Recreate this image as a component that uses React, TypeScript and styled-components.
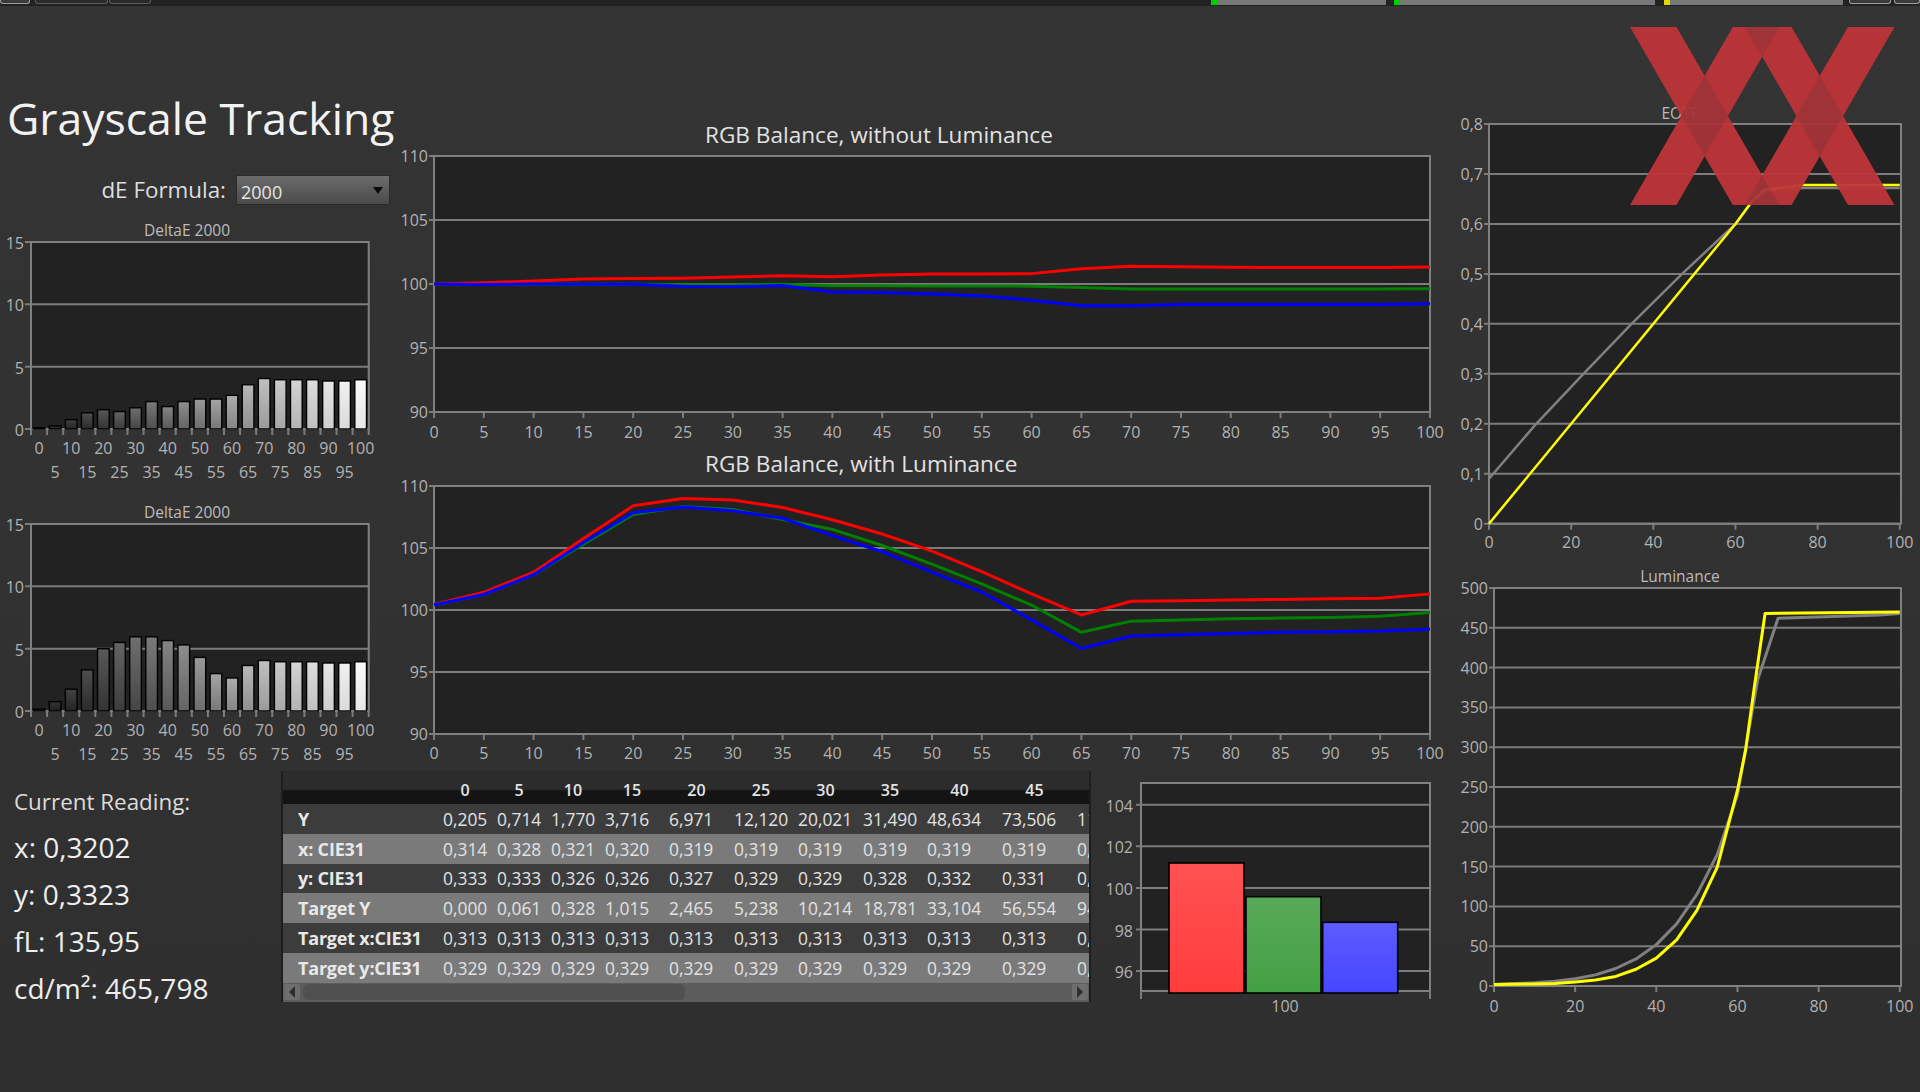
import styled, { createGlobalStyle } from 'styled-components';

type Point = [number, number];

type Series = {
  color: string;
  width: number;
  points: Point[];
};

const GlobalStyle = createGlobalStyle`
  html, body {
    margin: 0;
    padding: 0;
    background: #303030;
  }
  body {
    font-family: "Open Sans", "Noto Sans", "Liberation Sans", sans-serif;
    color: #dcdcdc;
  }
`;

const steps = Array.from({ length: 21 }, (_, i) => i * 5);
const withSteps = (values: number[]): Point[] => values.map((v, i) => [steps[i], v]);

const balanceFlat: Series[] = [
  {
    color: '#008000',
    width: 3,
    points: withSteps([100, 100, 100, 99.98, 99.98, 99.95, 99.95, 99.98, 99.87, 99.87, 99.85, 99.85, 99.83, 99.72, 99.6, 99.6, 99.6, 99.6, 99.6, 99.6, 99.62]),
  },
  {
    color: '#ff0000',
    width: 3,
    points: withSteps([100, 100.1, 100.23, 100.4, 100.42, 100.45, 100.55, 100.65, 100.57, 100.7, 100.78, 100.78, 100.81, 101.2, 101.38, 101.35, 101.3, 101.28, 101.28, 101.28, 101.33]),
  },
  {
    color: '#0000ff',
    width: 3,
    points: withSteps([100, 99.97, 100, 99.98, 99.98, 99.83, 99.8, 99.88, 99.38, 99.33, 99.22, 99.07, 98.73, 98.3, 98.3, 98.4, 98.4, 98.4, 98.4, 98.4, 98.45]),
  },
];

const balanceLum: Series[] = [
  {
    color: '#ff0000',
    width: 3,
    points: withSteps([100.44, 101.43, 103.05, 105.77, 108.4, 109, 108.87, 108.27, 107.28, 106.13, 104.75, 103.1, 101.3, 99.6, 100.7, 100.75, 100.8, 100.85, 100.9, 100.95, 101.3]),
  },
  {
    color: '#008000',
    width: 3,
    points: withSteps([100.4, 101.25, 102.85, 105.3, 107.7, 108.35, 108.1, 107.3, 106.5, 105.2, 103.7, 102.1, 100.4, 98.2, 99.1, 99.2, 99.3, 99.35, 99.4, 99.5, 99.8]),
  },
  {
    color: '#0000ff',
    width: 3,
    points: withSteps([100.4, 101.25, 102.85, 105.45, 107.85, 108.3, 108, 107.4, 106, 104.7, 103.05, 101.45, 99.2, 96.9, 97.9, 98, 98.1, 98.2, 98.25, 98.3, 98.45]),
  },
];

// eotf and luminance curves were read straight off the plot, in data units
const eotf: Series[] = [
  {
    color: '#808080',
    width: 2.5,
    points: [[0, 0.09], [11.5, 0.2], [23, 0.3], [34.7, 0.4], [47, 0.5], [60, 0.6], [64, 0.645], [68, 0.668], [76.5, 0.672], [100, 0.672]],
  },
  {
    color: '#ffff00',
    width: 2.5,
    points: [[0, 0], [60, 0.6], [64, 0.645], [67, 0.668], [76, 0.678], [100, 0.678]],
  },
];

const luminance: Series[] = [
  {
    color: '#808080',
    width: 3,
    points: [[0, 2], [5, 3], [10, 4], [15, 6], [20, 9], [25, 14], [30, 22], [35, 34], [40, 52], [45, 78], [50, 115], [55, 165], [60, 240], [65, 385], [70, 462], [95, 466], [100, 468]],
  },
  {
    color: '#ffff00',
    width: 3,
    points: [[0, 2], [10, 2.5], [15, 3], [20, 5], [25, 7.5], [30, 12], [35, 21], [40, 35], [45, 58], [50, 95], [55, 149], [60, 246], [62, 296], [64, 370], [66.8, 468], [100, 470]],
  },
];

const deltaOne = [0.1, 0.25, 0.75, 1.3, 1.55, 1.4, 1.7, 2.2, 1.8, 2.2, 2.4, 2.4, 2.7, 3.55, 4.05, 3.95, 3.95, 3.95, 3.85, 3.85, 3.95];
const deltaTwo = [0.15, 0.75, 1.75, 3.3, 5, 5.5, 5.95, 5.95, 5.65, 5.3, 4.3, 3, 2.65, 3.65, 4.05, 3.95, 3.95, 3.95, 3.85, 3.85, 3.95];

const tableHeads = ['0', '5', '10', '15', '20', '25', '30', '35', '40', '45', ''];

const tableRows: { label: string; values: string[] }[] = [
  { label: 'Y', values: ['0,205', '0,714', '1,770', '3,716', '6,971', '12,120', '20,021', '31,490', '48,634', '73,506', '11'] },
  { label: 'x: CIE31', values: ['0,314', '0,328', '0,321', '0,320', '0,319', '0,319', '0,319', '0,319', '0,319', '0,319', '0,'] },
  { label: 'y: CIE31', values: ['0,333', '0,333', '0,326', '0,326', '0,327', '0,329', '0,329', '0,328', '0,332', '0,331', '0,'] },
  { label: 'Target Y', values: ['0,000', '0,061', '0,328', '1,015', '2,465', '5,238', '10,214', '18,781', '33,104', '56,554', '94'] },
  { label: 'Target x:CIE31', values: ['0,313', '0,313', '0,313', '0,313', '0,313', '0,313', '0,313', '0,313', '0,313', '0,313', '0,'] },
  { label: 'Target y:CIE31', values: ['0,329', '0,329', '0,329', '0,329', '0,329', '0,329', '0,329', '0,329', '0,329', '0,329', '0,'] },
];

type LineChartProps = {
  width: number;
  height: number;
  left: number;
  top: number;
  plotW: number;
  plotH: number;
  xMax: number;
  yMin: number;
  yMax: number;
  xTicks: number[];
  yTicks: number[];
  labelGap: number;
  series: Series[];
  decimals?: boolean;
};

function LineChart(props: LineChartProps) {
  const { width, height, left, top, plotW, plotH, xMax, yMin, yMax, xTicks, yTicks, labelGap, series, decimals } = props;
  const sx = (v: number) => left + (v / xMax) * plotW;
  const sy = (v: number) => top + plotH - ((v - yMin) / (yMax - yMin)) * plotH;
  const bottom = top + plotH;
  return (
    <ChartSvg width={width} height={height}>
      <rect x={left} y={top} width={plotW} height={plotH} fill="#222222" />
      {yTicks.map((t) => (
        <g key={t}>
          <GridLine x1={left - 5} x2={left + plotW} y1={sy(t)} y2={sy(t)} />
          <AxisLabel x={left - 6} y={sy(t) + 6} textAnchor="end">
            {decimals ? String(t).replace('.', ',') : t}
          </AxisLabel>
        </g>
      ))}
      {xTicks.map((t) => (
        <g key={t}>
          <GridLine x1={sx(t)} x2={sx(t)} y1={bottom} y2={bottom + 6} />
          <AxisLabel x={sx(t)} y={bottom + labelGap} textAnchor="middle">
            {t}
          </AxisLabel>
        </g>
      ))}
      <PlotFrame x={left} y={top} width={plotW} height={plotH} />
      {series.map((s) => (
        <polyline
          key={s.color}
          points={s.points.map(([x, y]) => `${sx(x)},${sy(y)}`).join(' ')}
          fill="none"
          stroke={s.color}
          strokeWidth={s.width}
          strokeLinejoin="round"
        />
      ))}
    </ChartSvg>
  );
}

function DeltaChart({ id, values }: { id: string; values: number[] }) {
  const left = 31;
  const top = 2;
  const plotW = 337.7;
  const plotH = 187;
  const band = plotW / 21;
  const sy = (v: number) => top + plotH - (v / 15) * plotH;
  return (
    <ChartSvg width={374} height={244}>
      <defs>
        {values.map((_, i) => {
          const p = i / 20;
          const hi = Math.round(40 + 210 * Math.pow(p, 0.9));
          const lo = Math.round(26 + 205 * Math.pow(p, 1.3));
          return (
            <linearGradient key={i} id={`${id}-${i}`} x1="0" y1="0" x2="0" y2="1">
              <stop offset="0" stopColor={`rgb(${hi},${hi},${hi})`} />
              <stop offset="1" stopColor={`rgb(${lo},${lo},${lo})`} />
            </linearGradient>
          );
        })}
      </defs>
      <rect x={left} y={top} width={plotW} height={plotH} fill="#222222" />
      {[0, 5, 10, 15].map((t) => (
        <g key={t}>
          <GridLine x1={left - 6} x2={left + plotW} y1={sy(t)} y2={sy(t)} />
          <AxisLabel x={24} y={sy(t) + 7} textAnchor="end">
            {t}
          </AxisLabel>
        </g>
      ))}
      <PlotFrame x={left} y={top} width={plotW} height={plotH} />
      {values.map((v, i) => (
        <rect
          key={i}
          x={left + band * i + 2.2}
          y={sy(v)}
          width={band - 4.4}
          height={plotH + top - sy(v)}
          fill={`url(#${id}-${i})`}
          stroke="#000000"
          strokeWidth={1.4}
        />
      ))}
      {Array.from({ length: 22 }, (_, i) => (
        <GridLine key={i} x1={left + band * i} x2={left + band * i} y1={top + plotH} y2={top + plotH + 6} />
      ))}
      {steps.map((s, i) => (
        <AxisLabel key={s} x={left + band * (i + 0.5)} y={top + plotH + (i % 2 ? 49 : 25)} textAnchor="middle">
          {s}
        </AxisLabel>
      ))}
    </ChartSvg>
  );
}

function LevelChart() {
  const left = 50;
  const top = 12;
  const plotW = 289;
  const plotH = 208;
  const sy = (v: number) => 33.7 + (104 - v) * 20.8;
  const bars = [
    { x: 78, w: 75, y: 92, hi: '#ff5252', lo: '#ff3c3c' },
    { x: 155, w: 75, y: 125.7, hi: '#58aa58', lo: '#44a044' },
    { x: 231.7, w: 75, y: 151.3, hi: '#5c5cff', lo: '#4646ff' },
  ];
  return (
    <ChartSvg width={349} height={248}>
      <defs>
        {bars.map((b, i) => (
          <linearGradient key={i} id={`level-${i}`} x1="0" y1="0" x2="0" y2="1">
            <stop offset="0" stopColor={b.hi} />
            <stop offset="1" stopColor={b.lo} />
          </linearGradient>
        ))}
      </defs>
      <rect x={left} y={top} width={plotW} height={plotH} fill="#222222" />
      {[104, 102, 100, 98, 96].map((t) => (
        <g key={t}>
          <GridLine x1={left - 5} x2={left + plotW} y1={sy(t)} y2={sy(t)} />
          <AxisLabel x={42} y={sy(t) + 7} textAnchor="end">
            {t}
          </AxisLabel>
        </g>
      ))}
      <PlotFrame x={left} y={top} width={plotW} height={plotH} />
      {bars.map((b, i) => (
        <rect
          key={i}
          x={b.x}
          y={b.y}
          width={b.w}
          height={top + plotH + 2 - b.y}
          fill={`url(#level-${i})`}
          stroke="#000000"
          strokeWidth={1.6}
        />
      ))}
      <GridLine x1={left} x2={left} y1={top + plotH} y2={top + plotH + 8} />
      <GridLine x1={left + plotW} x2={left + plotW} y1={top + plotH} y2={top + plotH + 8} />
      <AxisLabel x={194} y={241} textAnchor="middle">
        100
      </AxisLabel>
    </ChartSvg>
  );
}

function Logo() {
  return (
    <LogoMark width={265} height={178} viewBox="0 0 265 178">
      <g opacity={0.95}>
        <polygon points="0,0 46.5,0 149.3,178 102.8,178" fill="#be3539" />
        <polygon points="102.8,0 149.3,0 46.5,178 0,178" fill="#be3539" />
        <polygon points="115,0 161.6,0 264.5,178 218,178" fill="#be3539" />
        <polygon points="218,0 264.5,0 161.6,178 115,178" fill="#be3539" />
        <polygon points="51.4,89 74.6,48.8 97.9,89 74.7,129.2" fill="#a63339" />
        <polygon points="166.5,89 189.8,48.8 213,89 189.7,129.2" fill="#a63339" />
        <polygon points="115,0 149.3,0 132,29.7" fill="#a63339" />
        <polygon points="115,178 149.3,178 132,148.3" fill="#a63339" />
      </g>
    </LogoMark>
  );
}

function App() {
  return (
    <>
      <GlobalStyle />
      <Page>
        <TopBar>
          <TopTab $width={30} $outlined />
          <TopTab $width={73} $gap={5} />
          <TopTab $width={42} $gap={1} />
          <TopSpacer />
          <Segment $accent="#00d000" $width={175} />
          <Segment $accent="#00d000" $width={261} $gap={8} />
          <Segment $accent="#e0d800" $width={179} $gap={9} />
          <TopTab $width={42} $gap={6} $outlined />
          <TopTab $width={26} $gap={3} $outlined />
        </TopBar>
        <Workspace>
          <LeftArea>
            <UpperRow>
              <SideColumn>
                <PageTitle>Grayscale Tracking</PageTitle>
                <FormulaRow>
                  <FormulaLabel>dE Formula:</FormulaLabel>
                  <FormulaSelect>
                    2000
                    <SelectArrow />
                  </FormulaSelect>
                </FormulaRow>
                <SmallTitle $top={15} $width={374}>DeltaE 2000</SmallTitle>
                <DeltaChart id="delta-a" values={deltaOne} />
                <SmallTitle $top={18} $width={374}>DeltaE 2000</SmallTitle>
                <DeltaChart id="delta-b" values={deltaTwo} />
              </SideColumn>
              <CenterColumn>
                <WideTitle>RGB Balance, without Luminance</WideTitle>
                <LineChart width={1040} height={299} left={34} top={5} plotW={996} plotH={256} xMax={100} yMin={90} yMax={110} xTicks={steps} yTicks={[90, 95, 100, 105, 110]} labelGap={26} series={balanceFlat} />
                <WideTitle>RGB Balance, with Luminance</WideTitle>
                <LineChart width={1040} height={285} left={34} top={6} plotW={996} plotH={248} xMax={100} yMin={90} yMax={110} xTicks={steps} yTicks={[90, 95, 100, 105, 110]} labelGap={25} series={balanceLum} />
              </CenterColumn>
            </UpperRow>
            <LowerRow>
              <ReadingPanel>
                <ReadingHead>Current Reading:</ReadingHead>
                <ReadingValue>x: 0,3202</ReadingValue>
                <ReadingValue>y: 0,3323</ReadingValue>
                <ReadingValue>fL: 135,95</ReadingValue>
                <ReadingValue>cd/m²: 465,798</ReadingValue>
              </ReadingPanel>
              <DataTable>
                <HeadRow>
                  <span />
                  {tableHeads.map((h, i) => (
                    <HeadCell key={i}>{h}</HeadCell>
                  ))}
                </HeadRow>
                {tableRows.map((row, i) => (
                  <BodyRow key={row.label} $light={i % 2 === 1}>
                    <RowLabel>{row.label}</RowLabel>
                    {row.values.map((v, j) => (
                      <ValueCell key={j}>{v}</ValueCell>
                    ))}
                  </BodyRow>
                ))}
                <ScrollBar>
                  <ScrollButton>
                    <ScrollArrow $left />
                  </ScrollButton>
                  <ScrollThumb />
                  <ScrollButton>
                    <ScrollArrow />
                  </ScrollButton>
                </ScrollBar>
              </DataTable>
              <LevelChart />
            </LowerRow>
          </LeftArea>
          <RightColumn>
            <SmallTitle $top={0} $width={480}>EOTF</SmallTitle>
            <LineChart width={480} height={438} left={49} top={1} plotW={412} plotH={399.7} xMax={100.3} yMin={0} yMax={0.8} xTicks={[0, 20, 40, 60, 80, 100]} yTicks={[0, 0.1, 0.2, 0.3, 0.4, 0.5, 0.6, 0.7, 0.8]} labelGap={24} series={eotf} decimals />
            <SmallTitle $top={5} $width={480}>Luminance</SmallTitle>
            <LineChart width={480} height={440} left={54} top={2} plotW={407} plotH={398} xMax={100.3} yMin={0} yMax={500} xTicks={[0, 20, 40, 60, 80, 100]} yTicks={[0, 50, 100, 150, 200, 250, 300, 350, 400, 450, 500]} labelGap={26} series={luminance} />
          </RightColumn>
        </Workspace>
        <Logo />
      </Page>
    </>
  );
}

const Page = styled.div`
  position: relative;
  width: 1920px;
  height: 1092px;
  overflow: hidden;
  display: flex;
  flex-direction: column;
  background: linear-gradient(#343434, #2f2f2f);
`;

const TopBar = styled.div`
  flex: none;
  height: 6px;
  display: flex;
  background: #222222;
`;

const TopSpacer = styled.div`
  flex: 1;
`;

const TopTab = styled.div<{ $width: number; $gap?: number; $outlined?: boolean }>`
  box-sizing: border-box;
  width: ${(p) => p.$width}px;
  height: 4px;
  margin-left: ${(p) => p.$gap ?? 0}px;
  background: ${(p) => (p.$outlined ? '#3a3a3a' : '#2a2a2a')};
  border: 1px solid ${(p) => (p.$outlined ? '#9c9c9c' : '#5c5c5c')};
  border-top: none;
  border-radius: 0 0 3px 3px;
`;

const Segment = styled.div<{ $accent: string; $width: number; $gap?: number }>`
  box-sizing: border-box;
  width: ${(p) => p.$width}px;
  height: 5px;
  margin-left: ${(p) => p.$gap ?? 0}px;
  background: #787878;
  border-left: 6px solid ${(p) => p.$accent};
`;

const Workspace = styled.div`
  flex: 1;
  display: flex;
`;

const LeftArea = styled.div`
  width: 1440px;
  display: flex;
  flex-direction: column;
`;

const UpperRow = styled.div`
  display: flex;
  height: 759px;
`;

const SideColumn = styled.div`
  width: 400px;
  display: flex;
  flex-direction: column;
  padding-top: 87px;
  box-sizing: border-box;
`;

const PageTitle = styled.h1`
  margin: 0;
  padding-left: 7px;
  font-size: 44.5px;
  line-height: 50px;
  font-weight: 400;
  color: #f2f2f2;
  white-space: nowrap;
`;

const FormulaRow = styled.div`
  display: flex;
  align-items: center;
  justify-content: flex-end;
  gap: 10px;
  width: 390px;
  height: 30px;
  margin-top: 32px;
`;

const FormulaLabel = styled.label`
  font-size: 22.4px;
  line-height: 30px;
  color: #dedede;
`;

const FormulaSelect = styled.div`
  position: relative;
  box-sizing: border-box;
  width: 154px;
  height: 30px;
  padding: 3px 0 0 4px;
  font-size: 18px;
  line-height: 26px;
  color: #e6e6e6;
  background: linear-gradient(#6c6c6c, #4a4a4a);
  border: 1px solid #2a2a2a;
`;

const SelectArrow = styled.span`
  position: absolute;
  right: 6px;
  top: 11px;
  border-left: 5px solid transparent;
  border-right: 5px solid transparent;
  border-top: 7px solid #0a0a0a;
`;

const SmallTitle = styled.div<{ $top: number; $width: number }>`
  width: ${(p) => p.$width}px;
  margin-top: ${(p) => p.$top}px;
  text-align: center;
  font-size: 15.5px;
  line-height: 20px;
  color: #bcbcbc;
`;

const CenterColumn = styled.div`
  flex: 1;
  display: flex;
  flex-direction: column;
  padding-top: 115px;
`;

const WideTitle = styled.div`
  height: 30px;
  padding-left: 305px;
  font-size: 22.6px;
  line-height: 28px;
  color: #e2e2e2;
`;

const ChartSvg = styled.svg`
  display: block;
  flex: none;
  overflow: visible;
`;

const GridLine = styled.line`
  stroke: #7c7c7c;
  stroke-width: 2;
`;

const PlotFrame = styled.rect`
  fill: none;
  stroke: #808080;
  stroke-width: 2;
`;

const AxisLabel = styled.text`
  font-family: "Open Sans", "Noto Sans", "Liberation Sans", sans-serif;
  font-size: 16px;
  fill: #b2b2b2;
`;

const LowerRow = styled.div`
  display: flex;
  padding-top: 6px;
`;

const ReadingPanel = styled.div`
  box-sizing: border-box;
  width: 281px;
  padding: 9px 0 0 14px;
  display: flex;
  flex-direction: column;
  color: #eeeeee;
`;

const ReadingHead = styled.div`
  font-size: 22.4px;
  line-height: 44px;
  color: #dcdcdc;
`;

const ReadingValue = styled.div`
  font-size: 28px;
  line-height: 47px;
`;

const DataTable = styled.div`
  box-sizing: border-box;
  width: 810px;
  height: 231px;
  flex: none;
  padding: 0 2px 0 2px;
  background: #1e1e1e;
  overflow: hidden;
  display: flex;
  flex-direction: column;
`;

const columns = '155px 54px 54px 54px 64px 65px 64px 65px 64px 75px 75px 17px';

const HeadRow = styled.div`
  flex: none;
  display: grid;
  grid-template-columns: ${columns};
  height: 33px;
  align-items: end;
  background: linear-gradient(#2c2c2c 0 55%, #141414 60% 100%);
`;

const HeadCell = styled.span`
  text-align: center;
  font-size: 16px;
  line-height: 26px;
  font-weight: 600;
  color: #e4e4e4;
  padding-bottom: 1px;
`;

const BodyRow = styled.div<{ $light: boolean }>`
  flex: none;
  display: grid;
  grid-template-columns: ${columns};
  height: 29.8px;
  align-items: center;
  background: ${(p) => (p.$light ? '#7a7a7a' : '#3c3c3c')};
`;

const RowLabel = styled.span`
  padding-left: 15px;
  font-size: 18px;
  font-weight: 700;
  letter-spacing: -0.2px;
  color: #e8e8e8;
  white-space: nowrap;
`;

const ValueCell = styled.span`
  padding-left: 5px;
  font-size: 17.4px;
  color: #e2e2e2;
  white-space: nowrap;
  overflow: hidden;
`;

const ScrollBar = styled.div`
  flex: none;
  height: 19px;
  display: flex;
  align-items: center;
  gap: 2px;
  background: #5c5c5c;
`;

const ScrollButton = styled.div`
  flex: none;
  box-sizing: border-box;
  width: 16px;
  height: 16px;
  margin: 0 1px;
  display: flex;
  align-items: center;
  justify-content: center;
  background: #6e6e6e;
  border-radius: 2px;
`;

const ScrollArrow = styled.span<{ $left?: boolean }>`
  border-top: 6px solid transparent;
  border-bottom: 6px solid transparent;
  border-left: ${(p) => (p.$left ? 'none' : '6px solid #2e2e2e')};
  border-right: ${(p) => (p.$left ? '6px solid #2e2e2e' : 'none')};
`;

const ScrollThumb = styled.div`
  width: 382px;
  height: 16px;
  margin-right: auto;
  background: #505050;
  border-radius: 6px;
`;

const RightColumn = styled.div`
  flex: 1;
  display: flex;
  flex-direction: column;
  padding-top: 97px;
`;

const LogoMark = styled.svg`
  position: absolute;
  left: 1630px;
  top: 27px;
`;

export default App;
